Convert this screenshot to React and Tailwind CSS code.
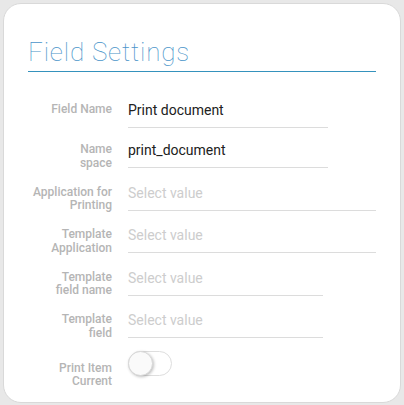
import React from 'react';

const rows = [
  { label: ['Field Name'], value: 'Print document', width: 'w-[200px]' },
  { label: ['Name', 'space'], value: 'print_document', width: 'w-[200px]' },
  { label: ['Application for', 'Printing'], placeholder: 'Select value', width: 'w-[248px]' },
  { label: ['Template', 'Application'], placeholder: 'Select value', width: 'w-[248px]' },
  { label: ['Template', 'field name'], placeholder: 'Select value', width: 'w-[195px]' },
  { label: ['Template', 'field'], placeholder: 'Select value', width: 'w-[195px]' },
];

const Label = ({ lines }) => (
  <div className="w-[84px] shrink-0 pt-[3px] text-right text-[12px] leading-[13.75px] font-medium text-[#b5b5b5]">
    {lines.map((l) => (
      <div key={l}>{l}</div>
    ))}
  </div>
);

const App = () => {
  return (
    <div className="w-[404px] h-[405px] bg-[#e8e8e8] p-[3px] pb-[2px] pr-[3px]" style={{ fontFamily: 'Roboto, "Noto Sans", sans-serif' }}>
      <div className="h-full w-full rounded-[18px] border border-[#d9d9d9] bg-white pl-[24px] pr-[24px] pt-[33px]">
        {/* Header */}
        <div className="border-b border-[#3592bd] pb-[4px]">
          <h1 className="text-[26px] leading-[30px] font-thin tracking-[0.8px] text-[#4a94c9]">Field Settings</h1>
        </div>

        <div className="mt-[28px] flex flex-col gap-[12px]">
          {rows.map((row) => (
            <div key={row.label.join(' ')} className="flex items-start gap-[16px]">
              <Label lines={row.label} />
              <div className={`${row.width} border-b border-[#dcdcdc] pb-[7px]`}>
                {row.value ? (
                  <div className="text-[14px] leading-[20px] text-[#212121]">{row.value}</div>
                ) : (
                  <div className="text-[14px] leading-[20px] text-[#cdcdcd]">{row.placeholder}</div>
                )}
              </div>
            </div>
          ))}

          <div className="mt-[6px] flex items-start gap-[16px]">
            <Label lines={['Print Item', 'Current']} />
            <div className="-mt-[8px] relative h-[25px] w-[44px] rounded-full border border-[#dedede] bg-white">
              <div className="absolute -left-px -top-px h-[25px] w-[25px] rounded-full border border-[#d8d8d8] bg-[#fafafa] shadow-[1px_1px_3px_rgba(0,0,0,0.25)]" />
            </div>
          </div>
        </div>
      </div>
    </div>
  );
};

export default App;
